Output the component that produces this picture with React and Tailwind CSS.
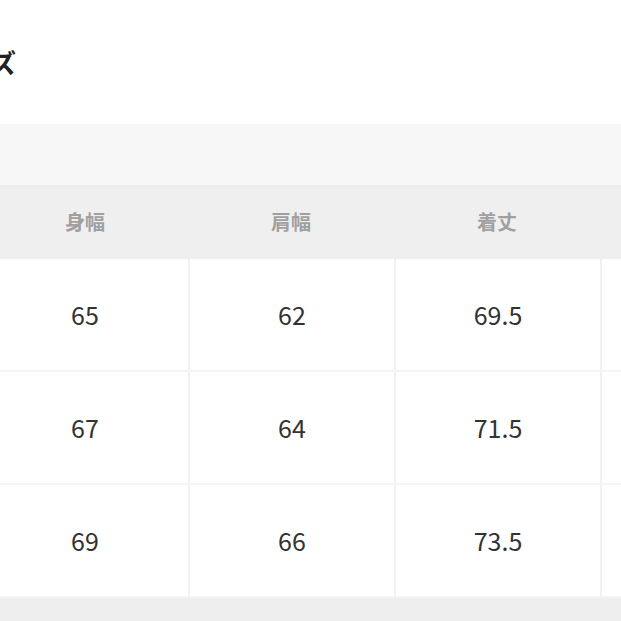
import React from "react";

const rows = [
  ["65", "62", "69.5", ""],
  ["67", "64", "71.5", ""],
  ["69", "66", "73.5", ""],
];
const headers = ["身幅", "肩幅", "着丈", ""];

export default function App() {
  return (
    <div
      className="w-[621px] h-[621px] overflow-hidden bg-white flex flex-col"
      style={{ fontFamily: '"Noto Sans CJK JP", "Noto Sans", sans-serif' }}
    >
      <div className="h-[124px] flex items-center shrink-0">
        <span className="ml-[-10px] text-[26px] font-bold text-[#222] leading-none">ズ</span>
      </div>
      <div className="h-[61px] bg-[#f7f7f7] shrink-0" />
      <div className="ml-[-18px] w-[830px] shrink-0">
        <div className="grid grid-cols-[206px_206px_206px_206px] h-[74px] bg-[#efefef]">
          {headers.map((h, i) => (
            <div key={i} className="flex items-center justify-center text-[20px] font-bold text-[#a0a0a0]">
              {h}
            </div>
          ))}
        </div>
        {rows.map((r, ri) => (
          <div
            key={ri}
            className="grid grid-cols-[206px_206px_206px_206px] h-[113px] border-b-2 border-[#f4f4f4]"
          >
            {r.map((v, ci) => (
              <div
                key={ci}
                className={
                  ci === 0
                    ? "flex items-center justify-center text-[25px] text-[#333]"
                    : "flex items-center justify-center border-l-2 border-[#f1f1f1] text-[25px] text-[#333]"
                }
              >
                {v}
              </div>
            ))}
          </div>
        ))}
      </div>
      <div className="flex-1 bg-[#eeeeee]" />
    </div>
  );
}
